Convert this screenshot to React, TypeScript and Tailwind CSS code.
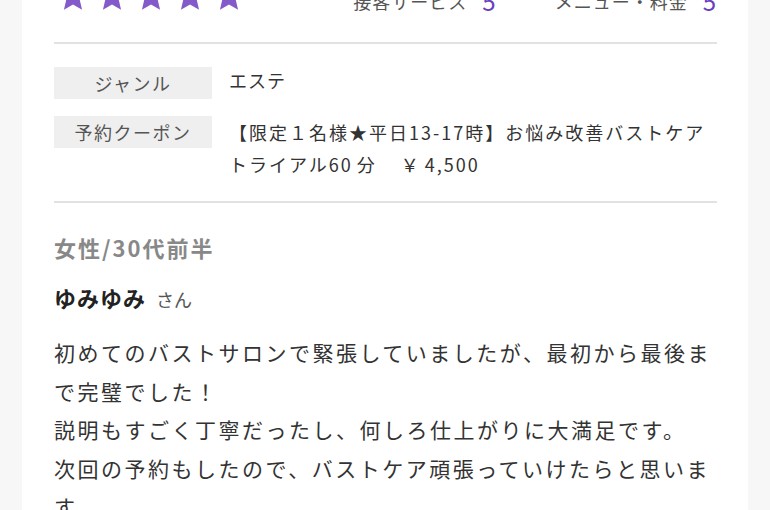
const font = { fontFamily: '"Noto Sans CJK JP", "Noto Sans", sans-serif' };

function Star() {
  return (
    <svg viewBox="0 0 24 24" className="h-[32px] w-[32px]" fill="#8459c9">
      <path d="M12 1.5l3.1 7.2 7.8.7-5.9 5.2 1.8 7.7L12 18.3l-6.8 4 1.8-7.7L1.1 9.4l7.8-.7z" />
    </svg>
  );
}

function InfoRow({ label, children }: { label: string; children: React.ReactNode }) {
  return (
    <div className="flex items-start gap-[17px]">
      <div className="flex h-[32px] w-[158px] shrink-0 items-center justify-center bg-[#efefef] text-[18px] tracking-[1.5px] text-[#555]">
        {label}
      </div>
      <div className="text-[18px] leading-[32px] tracking-[2px] text-[#333]">{children}</div>
    </div>
  );
}

export default function App() {
  return (
    <div className="h-[510px] w-[770px] overflow-hidden bg-[#f7f7f7]" style={font}>
      <div className="mx-[22px] flex h-full flex-col bg-white pl-[32px] pr-[31px]">
        <div className="-mt-[26px] flex h-[44px] shrink-0 items-center">
          <div className="flex gap-[7px] pl-[3px]">
            <Star />
            <Star />
            <Star />
            <Star />
            <Star />
          </div>
          <div className="ml-auto flex items-center gap-[58px] pt-[10px] text-[18px] tracking-[1px] text-[#555]">
            <span className="flex items-center gap-[15px]">
              接客サービス<span className="text-[24px] text-[#6a3fbf]">5</span>
            </span>
            <span className="flex items-center gap-[15px]">
              メニュー・料金<span className="text-[24px] text-[#6a3fbf]">5</span>
            </span>
          </div>
        </div>

        <div className="mt-[24px] h-[2px] shrink-0 bg-[#e2e2e2]" />

        <div className="mt-[23px] flex flex-col gap-[17px]">
          <InfoRow label="ジャンル">
            <span className="relative -top-[3px] tracking-[1px]">エステ</span>
          </InfoRow>
          <InfoRow label="予約クーポン">
            【限定１名様★平日13-17時】お悩み改善バストケア
            <br />
            トライアル60<span className="ml-[4px]">分</span>
            <span className="ml-[24px]">￥</span>
            <span className="ml-[4px]">4,500</span>
          </InfoRow>
        </div>

        <div className="mt-[21px] h-[2px] shrink-0 bg-[#e2e2e2]" />

        <div className="mt-[29px] text-[22px] font-bold leading-[30px] tracking-[2px] text-[#888]">女性/30代前半</div>

        <div className="mt-[20px] flex items-baseline gap-[10px] leading-[30px]">
          <span className="text-[22px] font-bold tracking-[1px] text-[#222]">ゆみゆみ</span>
          <span className="text-[18px] text-[#555]">さん</span>
        </div>

        <p className="mt-[19px] text-[21px] leading-[38.5px] tracking-[2.5px] text-[#333]">
          初めてのバストサロンで緊張していましたが、最初から最後まで完璧でした！
          <br />
          説明もすごく丁寧だったし、何しろ仕上がりに大満足です。
          <br />
          次回の予約もしたので、バストケア頑張っていけたらと思います。
        </p>
      </div>
    </div>
  );
}
